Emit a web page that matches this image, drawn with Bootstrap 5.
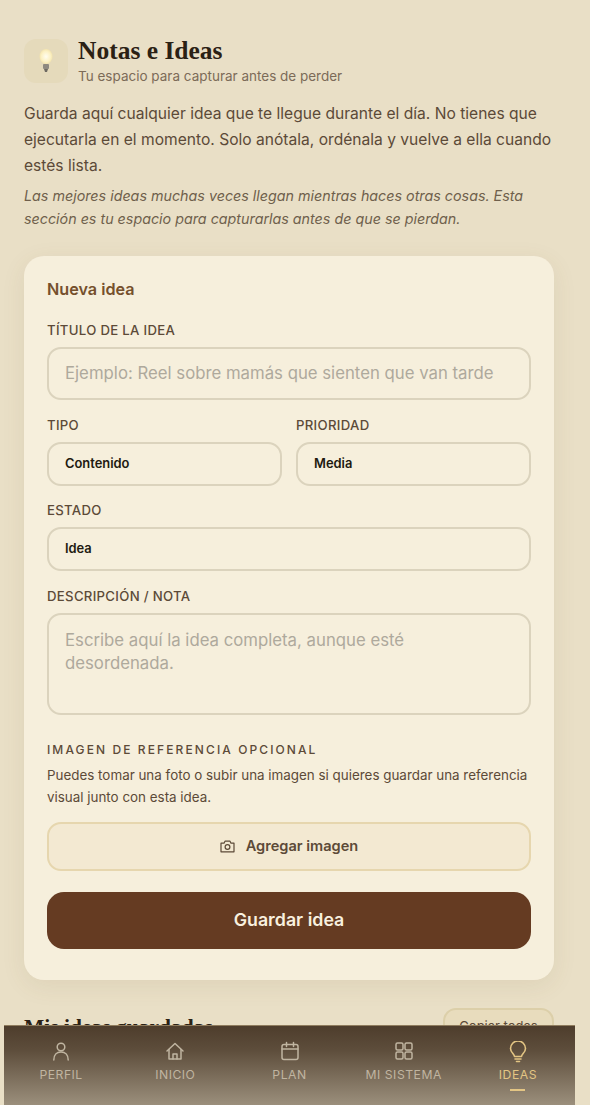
<!DOCTYPE html>
<html lang="es">
<head>
<meta charset="utf-8">
<title>Notas e Ideas</title>
<link href="https://cdn.jsdelivr.net/npm/bootstrap@5.3.0/dist/css/bootstrap.min.css" rel="stylesheet">
<style>
html,body{height:1105px;overflow:hidden}
body{background:#e9dfc6;font-family:"Inter","Liberation Sans",sans-serif;color:#5c4a38;position:relative}
.pagina{padding:38px 36px 0 24px}
.icono-caja{width:44px;height:44px;border-radius:12px;background:#e5dabb;margin:1px 2px 0 0}
.titulo{font-family:"Liberation Serif",serif;font-weight:700;font-size:25.5px;line-height:26px;color:#2b2114;margin:0}
.subtitulo{font-size:13.5px;line-height:17px;color:#7c6b58;margin-top:4px}
.intro{font-size:15.6px;line-height:26px;color:#5c4a38;margin:16px 0 0}
.cita{font-size:14.3px;line-height:23px;font-style:italic;color:#6f5f4c;margin:5px 0 0}
.tarjeta-idea{background:#f6efdc;border-radius:20px;margin-top:26px;padding:23px 23px 31px;box-shadow:0 6px 24px rgba(110,85,45,.09)}
.nueva{font-size:16.2px;font-weight:600;line-height:20px;color:#75502c;margin-bottom:23px}
.etiqueta{display:block;font-size:13.2px;font-weight:500;line-height:16px;color:#5c4a38;letter-spacing:.3px;margin-bottom:9px}
.campo{border:2px solid #dbd3bd;border-radius:14px;background:#f6efdc;padding:0 16px;display:flex;align-items:center}
.campo-t{height:53px;font-size:16.75px;color:#aea99c;margin-bottom:17px}
.campo-s{height:44px;font-size:12.9px;font-weight:600;color:#211a10;margin-bottom:16px}
.campo-ultimo{margin-bottom:17px}
.campo-a{height:102px;font-size:16.75px;line-height:23px;color:#aea99c;align-items:flex-start;padding:14px 30px 0 16px}
.img-titulo{font-size:12px;font-weight:500;letter-spacing:2.1px;line-height:15px;color:#5c4a38;margin-top:27px}
.img-texto{font-size:13.4px;line-height:22px;color:#5c4a38;margin-top:7px}
.agregar{height:49px;border:2px solid #e6d6ae;border-radius:14px;background:#f3e9d2;color:#5c4a38;font-size:14.6px;font-weight:600;margin-top:14px;gap:11px}
.guardar{height:57px;border-radius:17px;background:#653b22;color:#f8f0df;font-size:17.8px;font-weight:600;margin-top:21px}
.guardadas{margin-top:28px;height:40px}
.g-titulo{font-family:"Liberation Serif",serif;font-weight:700;font-size:21.5px;color:#2b2114;padding-top:3px}
.copiar{width:111px;height:40px;border:2px solid #dccfa9;border-radius:13px;background:#e8dcbd;font-size:13px;color:#5c4a38;padding-top:7px;text-align:center}
.barra{position:absolute;left:4px;top:1025px;width:571px;height:80px;background:linear-gradient(180deg,#4e3d2c 0%,#5d4d3b 30%,#9b8f7c 100%);border-top:1px solid #8f7c5d}
.item-nav{flex:1 1 0;font-size:12.2px;letter-spacing:.5px;line-height:15px;color:#c0b5a1;padding-top:15px;gap:6px}
.item-nav svg{display:block}
.activo{color:#e3c584}
.raya{width:15px;height:2px;background:#e3c584;margin-top:1px}
.columnas{column-gap:14px}
.etiqueta-activa{margin-top:-2px}
</style>
</head>
<body>
<div class="pagina">
  <header class="d-flex align-items-start gap-2">
    <div class="icono-caja d-flex align-items-center justify-content-center flex-shrink-0">
      <svg width="14" height="24" viewBox="0 0 14 24"><defs><radialGradient id="g"><stop offset="0" stop-color="#fffdf0"/><stop offset=".7" stop-color="#fcf1c4"/><stop offset="1" stop-color="#f3e4ae"/></radialGradient></defs><ellipse cx="7" cy="7.500" rx="6.500" ry="7.500" fill="url(#g)"/><rect x="4" y="15" width="6" height="5" rx="1" fill="#8f8a80"/><path d="M5 20h4l-1 3H6z" fill="#6e6a62"/></svg>
    </div>
    <div>
      <h1 class="titulo">Notas e Ideas</h1>
      <div class="subtitulo">Tu espacio para capturar antes de perder</div>
    </div>
  </header>
  <p class="intro">Guarda aquí cualquier idea que te llegue durante el día. No tienes que ejecutarla en el momento. Solo anótala, ordénala y vuelve a ella cuando estés lista.</p>
  <p class="cita">Las mejores ideas muchas veces llegan mientras haces otras cosas. Esta sección es tu espacio para capturarlas antes de que se pierdan.</p>

  <section class="tarjeta-idea">
    <div class="nueva">Nueva idea</div>
    <label class="etiqueta">TÍTULO DE LA IDEA</label>
    <div class="campo campo-t">Ejemplo: Reel sobre mamás que sienten que van tarde</div>
    <div class="row g-0 flex-nowrap columnas">
      <div class="col"><label class="etiqueta">TIPO</label><div class="campo campo-s">Contenido</div></div>
      <div class="col"><label class="etiqueta">PRIORIDAD</label><div class="campo campo-s">Media</div></div>
    </div>
    <label class="etiqueta">ESTADO</label>
    <div class="campo campo-s campo-ultimo">Idea</div>
    <label class="etiqueta">DESCRIPCIÓN / NOTA</label>
    <div class="campo campo-a">Escribe aquí la idea completa, aunque esté desordenada.</div>
    <div class="img-titulo">IMAGEN DE REFERENCIA OPCIONAL</div>
    <div class="img-texto">Puedes tomar una foto o subir una imagen si quieres guardar una referencia visual junto con esta idea.</div>
    <div class="agregar d-flex align-items-center justify-content-center">
      <svg width="15" height="13" viewBox="0 0 15 13" fill="none" stroke="#5c4a38" stroke-width="1.200"><path d="M1 3.200h3L5 1.200h5l1 2h3v8.600H1z" stroke-linejoin="round"/><circle cx="7.500" cy="7" r="2.400"/></svg>
      <span>Agregar imagen</span>
    </div>
    <div class="guardar d-flex align-items-center justify-content-center">Guardar idea</div>
  </section>

  <div class="guardadas d-flex justify-content-between">
    <div class="g-titulo">Mis ideas guardadas</div>
    <div class="copiar">Copiar todas</div>
  </div>
</div>

<nav class="barra d-flex">
  <div class="item-nav d-flex flex-column align-items-center">
    <svg width="20" height="20" viewBox="0 0 20 20" fill="none" stroke="#c0b5a1" stroke-width="1.500" stroke-linecap="round"><circle cx="10" cy="6" r="3.800"/><path d="M2.800 19c0-5 3-8 7.200-8s7.200 3 7.200 8"/></svg>
    <span>PERFIL</span>
  </div>
  <div class="item-nav d-flex flex-column align-items-center">
    <svg width="20" height="20" viewBox="0 0 20 20" fill="none" stroke="#c0b5a1" stroke-width="1.500" stroke-linejoin="round" stroke-linecap="round"><path d="M2 10 10 2.500 18 10"/><path d="M4 8.500V18h12V8.500"/><path d="M8 18v-5h4v5"/></svg>
    <span>INICIO</span>
  </div>
  <div class="item-nav d-flex flex-column align-items-center">
    <svg width="20" height="20" viewBox="0 0 20 20" fill="none" stroke="#c0b5a1" stroke-width="1.500" stroke-linecap="round"><rect x="2" y="3.500" width="16" height="15" rx="2"/><path d="M2 8h16M6.500 1.500v4M13.500 1.500v4"/></svg>
    <span>PLAN</span>
  </div>
  <div class="item-nav d-flex flex-column align-items-center">
    <svg width="20" height="20" viewBox="0 0 20 20" fill="none" stroke="#c0b5a1" stroke-width="1.500"><rect x="2" y="2" width="7" height="7" rx="1.500"/><rect x="11" y="2" width="7" height="7" rx="1.500"/><rect x="2" y="11" width="7" height="7" rx="1.500"/><rect x="11" y="11" width="7" height="7" rx="1.500"/></svg>
    <span>MI SISTEMA</span>
  </div>
  <div class="item-nav activo d-flex flex-column align-items-center">
    <svg width="20" height="22" viewBox="0 0 20 22" fill="none" stroke="#e3c584" stroke-width="1.600" stroke-linecap="round"><path d="M6.500 15.500c0-2.500-4-3.800-4-8a7.500 7.500 0 0 1 15 0c0 4.200-4 5.500-4 8z" stroke-linejoin="round"/><path d="M7 18h6M8.500 20.500h3"/></svg>
    <span class="etiqueta-activa">IDEAS</span>
    <div class="raya"></div>
  </div>
</nav>
<script src="https://cdn.jsdelivr.net/npm/bootstrap@5.3.0/dist/js/bootstrap.bundle.min.js"></script>
</body>
</html>
